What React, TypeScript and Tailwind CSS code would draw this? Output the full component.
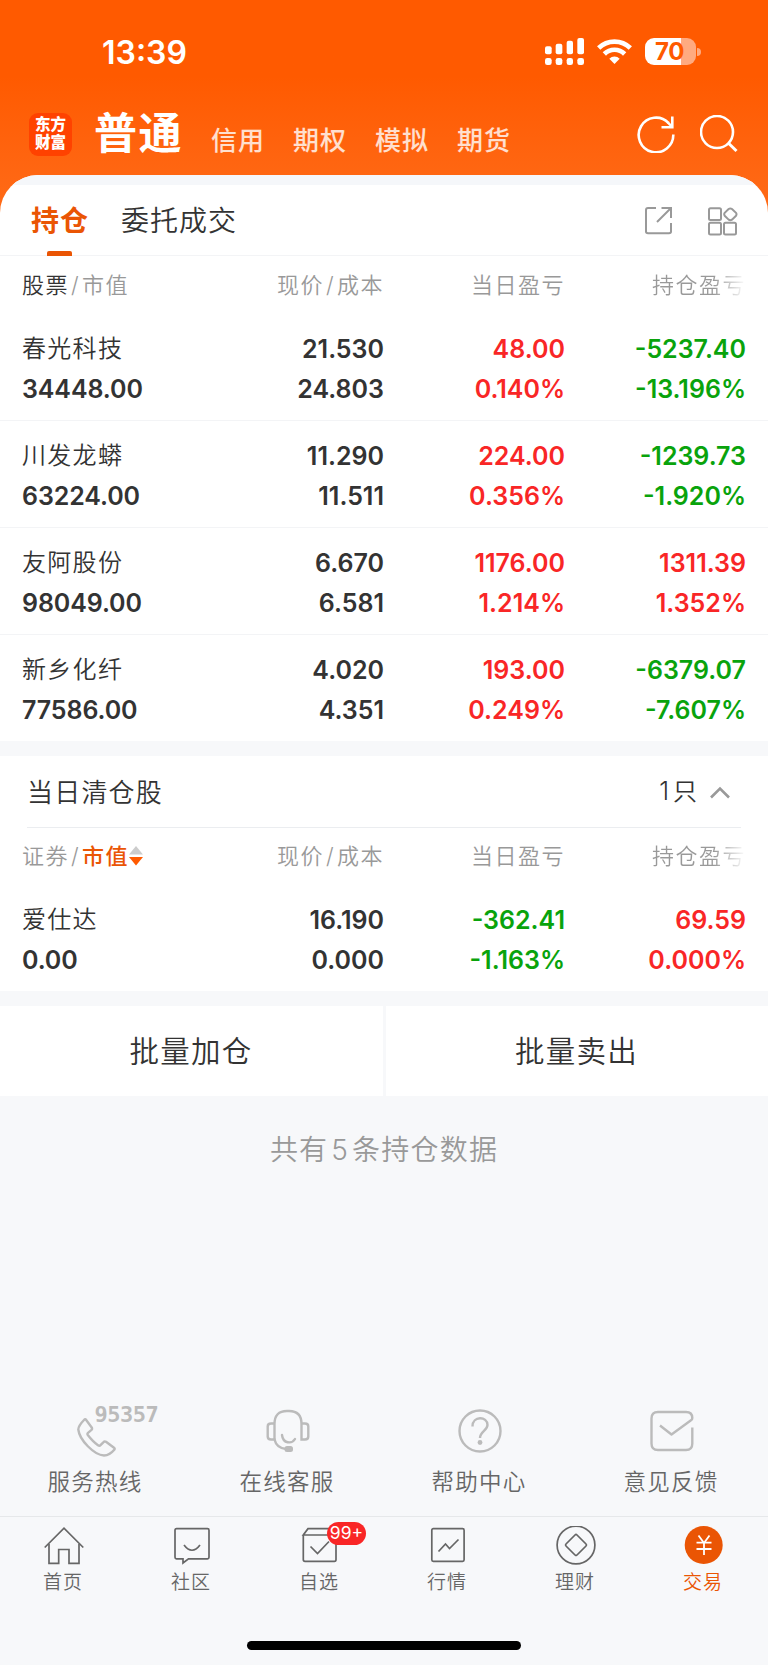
import type { ReactNode } from 'react';
import clsx from 'clsx';

type Tone = 'up' | 'down';

interface Holding {
  name: string;
  value: string;
  price: string;
  cost: string;
  dayProfit: string;
  dayRate: string;
  dayTone: Tone;
  profit: string;
  rate: string;
  tone: Tone;
}

const holdings: Holding[] = [
  { name: '春光科技', value: '34448.00', price: '21.530', cost: '24.803', dayProfit: '48.00', dayRate: '0.140%', dayTone: 'up', profit: '-5237.40', rate: '-13.196%', tone: 'down' },
  { name: '川发龙蟒', value: '63224.00', price: '11.290', cost: '11.511', dayProfit: '224.00', dayRate: '0.356%', dayTone: 'up', profit: '-1239.73', rate: '-1.920%', tone: 'down' },
  { name: '友阿股份', value: '98049.00', price: '6.670', cost: '6.581', dayProfit: '1176.00', dayRate: '1.214%', dayTone: 'up', profit: '1311.39', rate: '1.352%', tone: 'up' },
  { name: '新乡化纤', value: '77586.00', price: '4.020', cost: '4.351', dayProfit: '193.00', dayRate: '0.249%', dayTone: 'up', profit: '-6379.07', rate: '-7.607%', tone: 'down' },
];

const cleared: Holding[] = [
  { name: '爱仕达', value: '0.00', price: '16.190', cost: '0.000', dayProfit: '-362.41', dayRate: '-1.163%', dayTone: 'down', profit: '69.59', rate: '0.000%', tone: 'up' },
];

const toneClass: Record<Tone, string> = {
  up: 'text-[#f92626]',
  down: 'text-[#09a30c]',
};

function StatusBar() {
  return (
    <div className="flex h-[104px] items-start justify-between pl-[102px] pr-[67px]">
      <span className="mt-[33px] text-[32px] leading-[40px] font-semibold text-white">13:39</span>
      <div className="mt-[38px] flex h-[27px] items-center">
        <svg width="39" height="27" viewBox="0 0 117 81" fill="#fff">
          <rect x="0" y="25" width="20" height="24" rx="6" />
          <rect x="32" y="17" width="20" height="32" rx="6" />
          <rect x="65" y="8" width="19" height="41" rx="6" />
          <rect x="97" y="0" width="20" height="49" rx="6" />
          <rect x="0" y="60" width="20" height="21" rx="7" />
          <rect x="32" y="60" width="20" height="21" rx="7" />
          <rect x="65" y="60" width="19" height="21" rx="7" />
          <rect x="97" y="60" width="20" height="21" rx="7" />
        </svg>
        <svg className="ml-[13px]" width="35" height="25" viewBox="0 0 105 75" fill="none" stroke="#fff" strokeWidth="14">
          <path d="M5 27 A68 68 0 0 1 100 27" />
          <path d="M22 45 A43 43 0 0 1 83 45" />
          <path d="M52.500 75 L37 59 A22 22 0 0 1 68 59 Z" fill="#fff" stroke="none" />
        </svg>
        <div className="ml-[13px] flex h-[27px] w-[51px] items-center justify-center rounded-[9px] bg-linear-to-r from-white from-70% to-[#ffaa80] to-70% pr-[2px]">
          <span className="text-[24px] leading-[27px] font-bold tracking-[-0.500px] text-[#ff5a00]">70</span>
        </div>
        <div className="ml-[1px] h-[8px] w-[4px] rounded-r-full bg-[#ffaa80]" />
      </div>
    </div>
  );
}

function AccountBar() {
  return (
    <div className="flex h-[71px] items-start">
      <div className="mt-[9px] ml-[29px] flex h-[43px] w-[43px] flex-col items-center justify-center rounded-[9px] bg-[#ff4200] pb-[2px] text-[15.500px] leading-[17.500px] font-black text-white">
        <span>东方</span>
        <span>财富</span>
      </div>
      <span className="mt-[2px] ml-[22px] text-[43px] leading-[54px] font-bold tracking-[1.500px] text-white">普通</span>
      <div className="mt-[17px] ml-[28px] flex gap-[28px] text-[26px] leading-[40px] font-medium tracking-[1px] text-white/80">
        <span>信用</span>
        <span>期权</span>
        <span>模拟</span>
        <span>期货</span>
      </div>
      <svg className="mt-[11px] ml-auto" width="38" height="38" viewBox="0 0 38 38" fill="none" stroke="#fff" strokeWidth="2.600">
        <path d="M36.300 19.500 A17.300 17.300 0 1 1 31.500 8" />
        <path d="M35.300 1.500 V12.300 H24.500" />
        <path d="M35 12 L31 7.500" />
      </svg>
      <svg className="mt-[11px] mr-[30px] ml-[25px]" width="38" height="38" viewBox="0 0 38 38" fill="none" stroke="#fff" strokeWidth="2.600">
        <circle cx="17" cy="17" r="16" />
        <path d="M28.300 28 L36.500 36" strokeWidth="3" />
      </svg>
    </div>
  );
}

function Tabs() {
  return (
    <div className="flex h-[71px] items-start border-b border-[#f3f4f6] text-[28px] leading-[42px] tracking-[1px]">
      <div className="mt-[15px] ml-[31px] flex h-[56px] flex-col items-center">
        <span className="font-bold text-[#ea5504]">持仓</span>
        <span className="mt-[9px] -ml-[1px] h-[5px] w-[25px] rounded-t-[2px] bg-[#ea5504]" />
      </div>
      <span className="mt-[15px] ml-[32px] font-[350] text-[#333]">委托成交</span>
      <svg className="mt-[22px] ml-auto" width="28" height="28" viewBox="0 0 28 28" fill="none" stroke="#999" strokeWidth="2">
        <path d="M11 1 H3 Q1 1 1 3 V24.500 Q1 26.300 3 26.300 H24 Q26 26.300 26 24.500 V16" />
        <path d="M16.500 1 H26 V11" />
        <path d="M25.500 1.500 L12 15" />
      </svg>
      <svg className="mt-[22px] mr-[30px] ml-[35px]" width="30" height="29" viewBox="0 0 30 29" fill="none" stroke="#999" strokeWidth="2">
        <rect x="1" y="1.200" width="12" height="11.700" rx="1.500" />
        <rect x="1" y="15.700" width="12" height="11.700" rx="1.500" />
        <rect x="16" y="15.700" width="12" height="11.700" rx="1.500" />
        <path d="M20.600 2 Q22.300 .8 24 2 L28 5.800 Q29 7.300 28 8.800 L24 12.600 Q22.300 13.800 20.600 12.600 L16.700 8.800 Q15.700 7.300 16.700 5.800 Z" />
      </svg>
    </div>
  );
}

function Slash() {
  return <span className="inline-block w-[13px] text-center">/</span>;
}

function ColumnHeader({ children }: { children: ReactNode }) {
  return (
    <div className="grid grid-cols-[200px_162px_181px_181px] px-[22px] pt-[8px] text-[22px] leading-[40px] font-[350] tracking-[1.500px] text-[#999]">
      <div className="flex items-center">{children}</div>
      <div className="text-right">
        现价<Slash />成本
      </div>
      <div className="text-right">当日盈亏</div>
      <div className="bg-linear-to-r from-[#999] from-82% to-white bg-clip-text text-right text-transparent">持仓盈亏</div>
    </div>
  );
}

function HoldingRow({ item, last }: { item: Holding; last: boolean }) {
  return (
    <div
      className={clsx(
        'grid grid-cols-[200px_162px_181px_181px] px-[22px] pt-[15px] text-right text-[25px] leading-[40px] font-semibold text-[#333]',
        last ? 'h-[106px]' : 'h-[107px] border-b border-[#f3f4f6]',
      )}
    >
      <div className="text-left">
        <div className="text-[24px] font-[350] tracking-[1.300px]">{item.name}</div>
        <div className="tracking-[-0.100px]">{item.value}</div>
      </div>
      <div>
        <div>{item.price}</div>
        <div>{item.cost}</div>
      </div>
      <div className={toneClass[item.dayTone]}>
        <div>{item.dayProfit}</div>
        <div>{item.dayRate}</div>
      </div>
      <div className={toneClass[item.tone]}>
        <div>{item.profit}</div>
        <div>{item.rate}</div>
      </div>
    </div>
  );
}

function PhoneIcon() {
  return (
    <svg width="39" height="39" viewBox="0 0 39 39" fill="none" stroke="#bbb" strokeWidth="2.400" strokeLinejoin="round">
      <path d="M7.500 1.500 C4.500 4.500 1.500 7.500 1.300 11.500 C2.500 22 17 37 27 37.500 C31.500 37.300 35 34.500 37.500 31.500 Q38 30.500 37 29.700 L29 23.800 Q27.500 23 26.300 24.300 L23.500 27.200 Q22.500 28.200 21 27.200 C17 24.500 13.500 20.500 10.800 17 Q10 15.800 11 14.800 L14.500 11.800 Q15.500 10.800 14.700 9.500 L9 1.700 Q8.200 .9 7.500 1.500 Z" />
    </svg>
  );
}

function HeadsetIcon() {
  return (
    <svg width="44" height="44" viewBox="0 0 44 44" fill="none" stroke="#bbb" strokeWidth="2.400">
      <path d="M8.500 31 V15 Q8.500 2 21 2 H23 Q35.500 2 35.500 15 V30.500 H39 Q42.300 30.500 42.300 27.500 V17.500 Q42.300 14.500 39 14.500 H35.500" />
      <path d="M8.500 14.500 H5 Q1.700 14.500 1.700 17.500 V27.500 Q1.700 30.500 5 30.500 H8.500 Q10.500 39 20 40" />
      <path d="M16 26 C17 35 26 35 29 30" strokeLinecap="round" />
      <rect x="18.500" y="37" width="8.500" height="6" rx="2.500" fill="#bbb" stroke="none" />
    </svg>
  );
}

function HelpIcon() {
  return (
    <svg width="44" height="44" viewBox="0 0 44 44" fill="none" stroke="#bbb" strokeWidth="2.400">
      <circle cx="22" cy="22" r="20.500" />
      <path d="M14.500 17.500 C14.500 6.500 29.500 7 29.500 16 C29.500 21.500 22 22.500 22 29" />
      <circle cx="22" cy="33.500" r="2.400" fill="#bbb" stroke="none" />
    </svg>
  );
}

function FeedbackIcon() {
  return (
    <svg width="44" height="44" viewBox="0 0 44 44" fill="none" stroke="#bbb" strokeWidth="2.400" strokeLinejoin="round">
      <path d="M42.300 18.500 V34.500 Q42.300 41 36 41 H8 Q1.500 41 1.500 34.500 V9.500 Q1.500 3 8 3 H36 Q42.300 3 42.300 9 Q42.300 10.500 41 11.300 L21.500 25.500 L10 16.500" />
    </svg>
  );
}

function Services() {
  const items = [
    {
      label: '服务热线',
      icon: (
        <div className="relative mt-[9px]">
          <PhoneIcon />
          <span className="absolute -top-[15px] left-[18px] font-['DejaVu_Sans_Mono'] text-[22px] leading-[24px] font-bold tracking-[-0.500px] text-[#bbb]">
            95357
          </span>
        </div>
      ),
    },
    { label: '在线客服', icon: <HeadsetIcon /> },
    { label: '帮助中心', icon: <HelpIcon /> },
    { label: '意见反馈', icon: <FeedbackIcon /> },
  ];

  return (
    <div className="grid h-[107px] grid-cols-4">
      {items.map((item) => (
        <div key={item.label} className="flex flex-col items-center">
          <div className="flex h-[53px] items-start">{item.icon}</div>
          <span className="pr-[2px] text-[22.500px] leading-[40px] font-[350] tracking-[1.300px] text-[#666]">{item.label}</span>
        </div>
      ))}
    </div>
  );
}

function NavIcon({ children }: { children: ReactNode }) {
  return (
    <svg width="40" height="40" viewBox="0 0 40 40" fill="none" stroke="#666" strokeWidth="1.700">
      {children}
    </svg>
  );
}

function BottomNav() {
  const items = [
    {
      label: '首页',
      icon: (
        <NavIcon>
          <path d="M.7 21.500 L20 2.200 L39.300 21.500" />
          <path d="M5 18 V37.300 H14.700 V23.500 H25 V37.300 H35 V18" />
        </NavIcon>
      ),
    },
    {
      label: '社区',
      icon: (
        <NavIcon>
          <path d="M4.500 2.700 H35.500 Q37 2.700 37 4.200 V31.300 Q37 32.800 35.500 32.800 H16.500 L11 37 V32.800 H4.500 Q3 32.800 3 31.300 V4.200 Q3 2.700 4.500 2.700 Z" />
          <path d="M12 19 Q20 29.500 28 19" />
        </NavIcon>
      ),
    },
    {
      label: '自选',
      icon: (
        <NavIcon>
          <path d="M3.300 9 V33.500 Q3.300 35.300 5 35.300 H34.500 Q36 35.300 36 33.500 V9 L32 2.700 H8 L3.300 9 H36" />
          <path d="M10.500 20.500 L17.500 27.500 L29 15.500" />
        </NavIcon>
      ),
    },
    {
      label: '行情',
      icon: (
        <NavIcon>
          <rect x="3.800" y="2.700" width="32.300" height="32.600" rx="1.500" />
          <path d="M10.500 25.500 L17.500 18 L21.500 22.500 L30.500 13.500" />
        </NavIcon>
      ),
    },
    {
      label: '理财',
      icon: (
        <NavIcon>
          <circle cx="20" cy="19" r="18.900" />
          <path d="M19 9 Q20 8 21 9 L30 18 Q31 19 30 20 L21 29 Q20 30 19 29 L10 20 Q9 19 10 18 Z" />
        </NavIcon>
      ),
    },
    {
      label: '交易',
      active: true,
      icon: (
        <NavIcon>
          <circle cx="19.700" cy="19" r="19" fill="#ea5504" stroke="none" />
          <path d="M14.500 9.500 L20 17 L25.500 9.500 M20 17 V29 M12.500 16.700 H27.500 M12.500 23 H27.500" stroke="#fff" strokeWidth="1.800" />
        </NavIcon>
      ),
    },
  ];

  return (
    <nav className="grid h-[125px] grid-cols-6 border-t border-[#e6e8ea] pt-[9px]">
      {items.map((item) => (
        <div key={item.label} className="relative flex flex-col items-center">
          {item.icon}
          <span
            className={clsx(
              'mt-[1px] pr-[2px] text-[19px] leading-[32px] font-[350] tracking-[1px]',
              item.active ? 'text-[#ea5504]' : 'text-[#666]',
            )}
          >
            {item.label}
          </span>
          {item.label === '自选' && (
            <span className="absolute -top-[4px] left-[71px] flex h-[23px] w-[39px] items-center justify-center rounded-full bg-[#f92626] text-[17.500px] text-white">
              99+
            </span>
          )}
        </div>
      ))}
    </nav>
  );
}

export default function App() {
  return (
    <div className="flex h-[1665px] w-[768px] flex-col overflow-hidden bg-[#f7f8fa] font-['Inter','Noto_Sans_CJK_SC',sans-serif]">
      <div className="bg-linear-to-b from-[#ff5a00] from-30% to-[#ff701c]">
        <StatusBar />
        <AccountBar />
        <div className="overflow-hidden rounded-t-[38px] bg-white">
          <div className="h-[10px] bg-[#f5f7fa]" />
          <Tabs />
        </div>
      </div>

      <section className="bg-white">
        <div className="h-[58px] pt-px">
          <ColumnHeader>
            <span className="text-[#333]">股票</span>
            <Slash />
            市值
          </ColumnHeader>
        </div>
        {holdings.map((item, i) => (
          <HoldingRow key={item.name} item={item} last={i === holdings.length - 1} />
        ))}
      </section>

      <section className="mt-[15px] bg-white">
        <div className="mx-[27px] flex h-[72px] items-center border-b border-[#ebedf0] font-[350] text-[#333]">
          <span className="pt-px text-[26px] tracking-[1.200px]">当日清仓股</span>
          <span className="ml-auto text-[24px] tracking-[1px]">
            <span className="mr-[3px] text-[25px]">1</span>只
          </span>
          <svg className="mt-[1px] mr-[11px] ml-[12px]" width="20" height="13" viewBox="0 0 20 13" fill="none" stroke="#999" strokeWidth="2.600">
            <path d="M1 11.500 L10 2.500 L19 11.500" />
          </svg>
        </div>
        <div className="h-[57px]">
          <ColumnHeader>
            证券
            <Slash />
            <span className="font-medium text-[#ea5504]">市值</span>
            <svg width="14" height="20" viewBox="0 0 14 20">
              <path d="M7 0 L14 8.500 H0 Z" fill="#ccc" />
              <path d="M7 19.500 L14 11 H0 Z" fill="#ff5a00" />
            </svg>
          </ColumnHeader>
        </div>
        {cleared.map((item) => (
          <HoldingRow key={item.name} item={item} last />
        ))}
      </section>

      <div className="mt-[15px] grid h-[90px] grid-cols-[383px_1fr] gap-[3px] text-center text-[29.500px] leading-[89px] font-[350] tracking-[1.200px] text-[#333]">
        <button className="bg-white pr-px">批量加仓</button>
        <button className="bg-white pr-px">批量卖出</button>
      </div>

      <p className="mt-[33px] text-center text-[28px] leading-[42px] font-[350] tracking-[1.200px] text-[#999]">
        共有<span className="mx-[3px]">5</span>条持仓数据
      </p>

      <div className="mt-auto">
        <Services />
        <BottomNav />
        <div className="mx-auto mb-[15px] h-[9px] w-[274px] rounded-full bg-black" />
      </div>
    </div>
  );
}
